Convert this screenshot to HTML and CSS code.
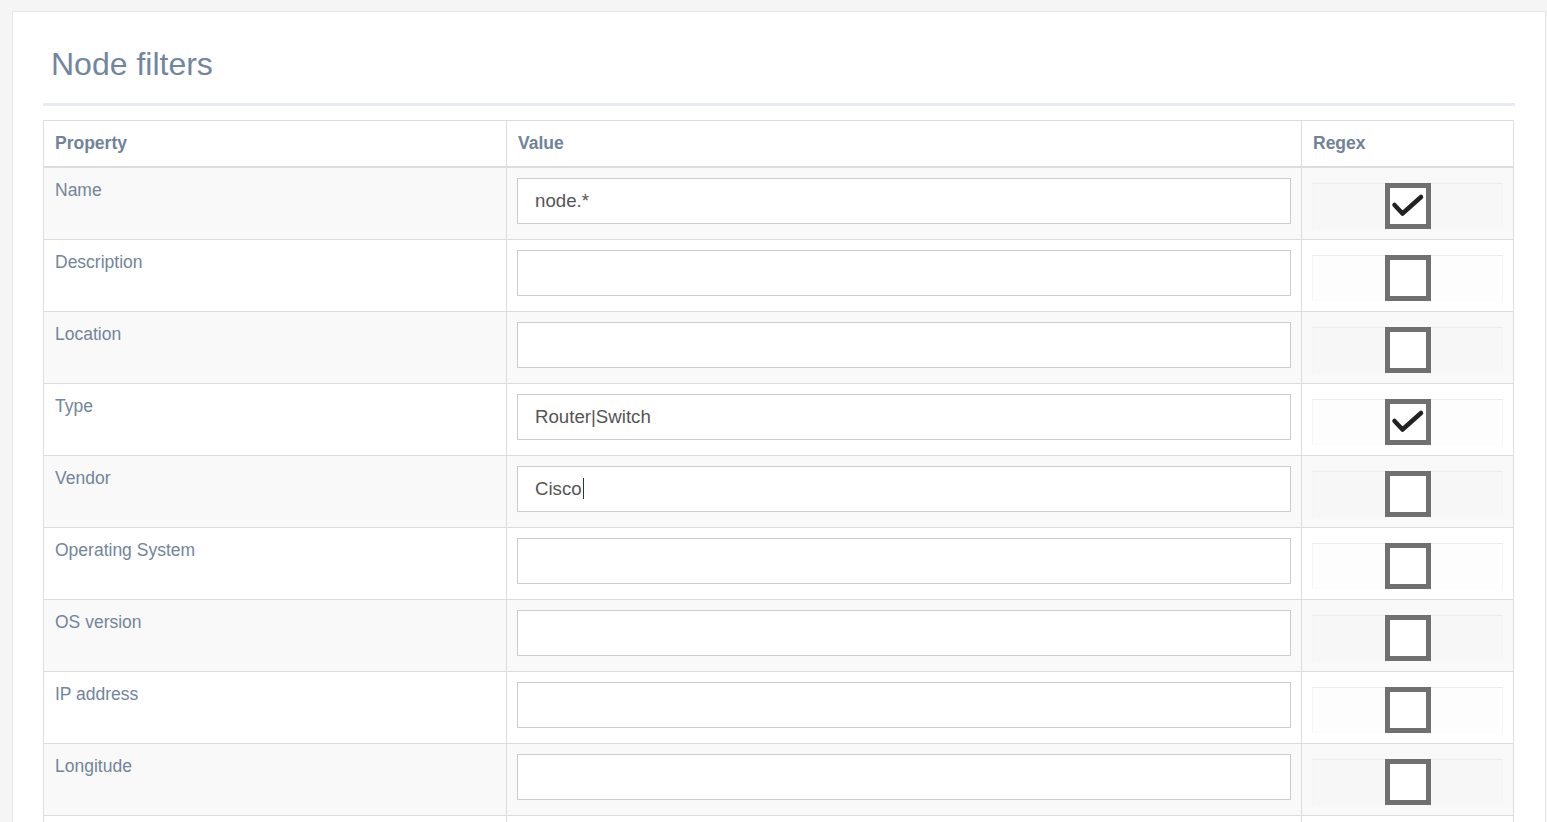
FILE: index.html
```html
<!DOCTYPE html>
<html lang="en">
<head>
    <meta charset="UTF-8">
    <title>Node filters</title>
    <link rel="stylesheet" href="styles.css">
</head>
<body>
    <div class="panel">
        <h2 class="panel-title">Node filters</h2>
        <div class="divider"></div>
        <table class="filters">
            <colgroup>
                <col class="col-property">
                <col class="col-value">
                <col class="col-regex">
            </colgroup>
            <thead>
                <tr>
                    <th>Property</th>
                    <th>Value</th>
                    <th>Regex</th>
                </tr>
            </thead>
            <tbody>
                <tr>
                    <td>Name</td>
                    <td><input type="text" class="field" value="node.*"></td>
                    <td><div class="regex-box"><span class="check"><svg viewBox="0 0 36 36"><path d="M4.5 17 L12.5 25.5 L31 9"/></svg></span></div></td>
                </tr>
                <tr>
                    <td>Description</td>
                    <td><input type="text" class="field"></td>
                    <td><div class="regex-box"><span class="check"></span></div></td>
                </tr>
                <tr>
                    <td>Location</td>
                    <td><input type="text" class="field"></td>
                    <td><div class="regex-box"><span class="check"></span></div></td>
                </tr>
                <tr>
                    <td>Type</td>
                    <td><input type="text" class="field" value="Router|Switch"></td>
                    <td><div class="regex-box"><span class="check"><svg viewBox="0 0 36 36"><path d="M4.5 17 L12.5 25.5 L31 9"/></svg></span></div></td>
                </tr>
                <tr>
                    <td>Vendor</td>
                    <td><div class="field">Cisco<span class="caret"></span></div></td>
                    <td><div class="regex-box"><span class="check"></span></div></td>
                </tr>
                <tr>
                    <td>Operating System</td>
                    <td><input type="text" class="field"></td>
                    <td><div class="regex-box"><span class="check"></span></div></td>
                </tr>
                <tr>
                    <td>OS version</td>
                    <td><input type="text" class="field"></td>
                    <td><div class="regex-box"><span class="check"></span></div></td>
                </tr>
                <tr>
                    <td>IP address</td>
                    <td><input type="text" class="field"></td>
                    <td><div class="regex-box"><span class="check"></span></div></td>
                </tr>
                <tr>
                    <td>Longitude</td>
                    <td><input type="text" class="field"></td>
                    <td><div class="regex-box"><span class="check"></span></div></td>
                </tr>
                <tr>
                    <td></td>
                    <td><input type="text" class="field"></td>
                    <td><div class="regex-box"><span class="check"></span></div></td>
                </tr>
            </tbody>
        </table>
    </div>
</body>
</html>
```

FILE: styles.css
```css
body {
    margin: 0;
    padding: 11px 1px 0 12px;
    background-color: #f5f5f5;
    font-family: 'Liberation Sans', Arial, sans-serif;
    color: #72859c;
}
.panel {
    background-color: white;
    border: 1px solid #e6e6e6;
    padding: 35px 30px 32px;
}
.panel-title {
    margin: 0 0 0 8px;
    font-size: 32px;
    font-weight: normal;
    line-height: 1.1;
    color: #72869f;
}
.divider {
    border-top: 3px solid #e7eaef;
    margin: 21px 0 14px;
}
.filters {
    width: calc(100% - 1px);
    border-collapse: collapse;
    table-layout: fixed;
    border: 1px solid #dddddd;
    font-size: 17.5px;
}
.col-property {
    width: 463px;
}
.col-value {
    width: 795px;
}
.filters th,
.filters td {
    padding: 10px;
    line-height: 24px;
    text-align: left;
    vertical-align: top;
    border: 1px solid #dddddd;
}
.filters th,
.filters td:first-child {
    padding-left: 11px;
}
.filters th {
    padding-bottom: 11px;
    font-weight: bold;
    color: #6f839b;
    border-bottom: 2px solid #dddddd;
}
.filters tbody tr:nth-child(odd) {
    background-color: #f9f9f9;
}
.field {
    display: block;
    width: 100%;
    height: 46px;
    box-sizing: border-box;
    margin: 0;
    padding: 0 17px;
    border: 1px solid #cccccc;
    border-radius: 0;
    background-color: white;
    font-family: 'Liberation Sans', Arial, sans-serif;
    font-size: 18.67px;
    line-height: 44px;
    color: #555555;
    outline: none;
}
.caret {
    display: inline-block;
    width: 1px;
    height: 21px;
    margin-left: 1px;
    vertical-align: -4px;
    background-color: #333333;
}
.regex-box {
    margin-top: 5px;
    height: 46px;
    box-shadow: inset 0 1px 0 #ececec, inset 1px 0 0 #f5f5f5, inset -1px 0 0 #f5f5f5;
    background-color: rgba(0, 0, 0, 0.008);
    text-align: center;
    line-height: 0;
}
.check {
    display: inline-block;
    width: 46px;
    height: 46px;
    box-sizing: border-box;
    border: 5px solid #707070;
    background-color: white;
}
.check svg {
    width: 36px;
    height: 36px;
    fill: none;
    stroke: #222222;
    stroke-width: 4.5;
    stroke-linecap: round;
    stroke-linejoin: round;
}
```
